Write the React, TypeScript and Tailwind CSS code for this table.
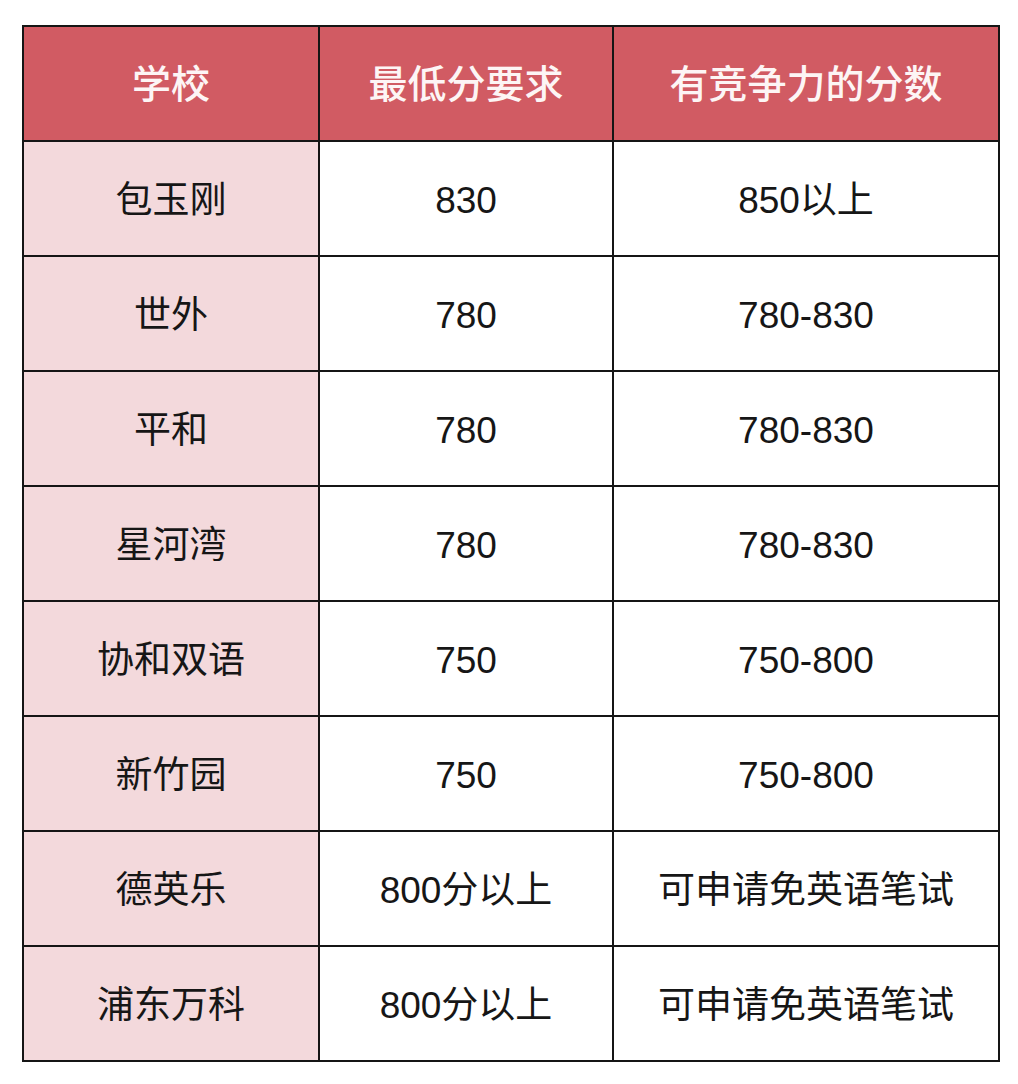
const rows: [string, string, string][] = [
  ["包玉刚", "830", "850以上"],
  ["世外", "780", "780-830"],
  ["平和", "780", "780-830"],
  ["星河湾", "780", "780-830"],
  ["协和双语", "750", "750-800"],
  ["新竹园", "750", "750-800"],
  ["德英乐", "800分以上", "可申请免英语笔试"],
  ["浦东万科", "800分以上", "可申请免英语笔试"],
];

const font = { fontFamily: '"Liberation Sans", "Noto Sans CJK SC", sans-serif' };

export default function App() {
  return (
    <div className="min-h-[1084px] w-[1018px] bg-white pt-[25px] pl-[22px]" style={font}>
      <table className="w-[976px] table-fixed border-collapse border-2 border-[#151515]">
        <colgroup>
          <col className="w-[296px]" />
          <col className="w-[294px]" />
          <col className="w-[386px]" />
        </colgroup>
        <thead>
          <tr className="h-[115px] bg-[#d15b63] text-[#fdf5f5]">
            <th className="border-2 border-[#151515] pt-1 text-[39px] font-medium">学校</th>
            <th className="border-2 border-[#151515] pt-1 text-[39px] font-medium">最低分要求</th>
            <th className="border-2 border-[#151515] pt-1 text-[39px] font-medium">有竞争力的分数</th>
          </tr>
        </thead>
        <tbody>
          {rows.map(([school, min, good]) => (
            <tr key={school} className="h-[115px] text-[#161616]">
              <td className="border-2 border-[#151515] bg-[#f3d9dc] pt-1 text-center text-[37px]">{school}</td>
              <td className="border-2 border-[#151515] bg-white pt-1 text-center text-[37px]">{min}</td>
              <td className="border-2 border-[#151515] bg-white pt-1 text-center text-[37px]">{good}</td>
            </tr>
          ))}
        </tbody>
      </table>
    </div>
  );
}
